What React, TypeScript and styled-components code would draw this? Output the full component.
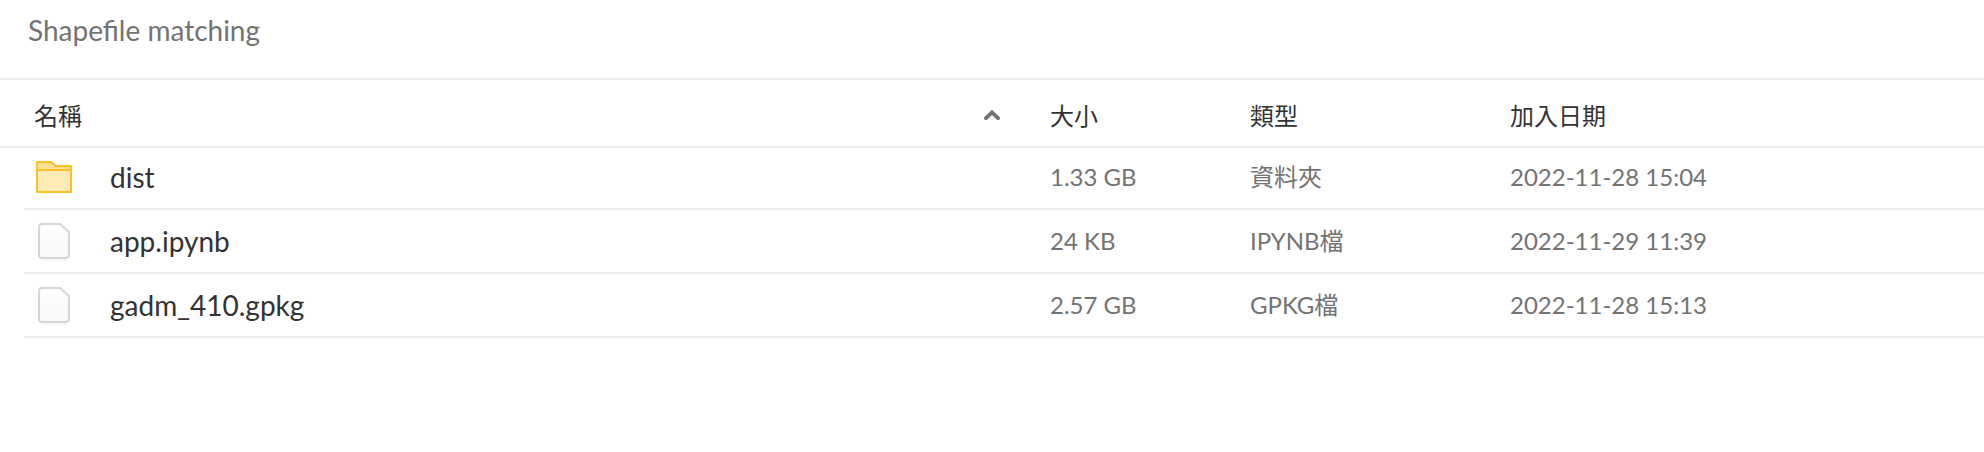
import React from "react";
import styled, { createGlobalStyle } from "styled-components";

const GlobalStyle = createGlobalStyle`
  * { box-sizing: border-box; }
  body {
    margin: 0;
    background: #ffffff;
    font-family: Lato, "Noto Sans CJK TC", sans-serif;
    color: #333333;
  }
`;

const Page = styled.main`
  height: 452px;
  overflow: hidden;
`;

const TitleBar = styled.header`
  height: 80px;
  padding: 13px 28px 0;
  border-bottom: 2px solid #ededed;
  font-size: 28px;
  line-height: 34px;
  color: #737373;
`;

const columns = "1026px 200px 260px 1fr";

const HeaderRow = styled.div`
  display: grid;
  grid-template-columns: ${columns};
  height: 68px;
  padding: 6px 0 0 24px;
  align-items: center;
  border-bottom: 2px solid #ededed;
  font-size: 24px;
  line-height: 36px;
`;

const NameHeading = styled.div`
  display: flex;
  align-items: center;
  justify-content: space-between;
  padding: 0 50px 0 10px;
`;

const Row = styled.div<{ $first: boolean }>`
  display: grid;
  grid-template-columns: ${columns};
  height: ${(p) => (p.$first ? 62 : 64)}px;
  padding-bottom: ${(p) => (p.$first ? 2 : 0)}px;
  margin-left: 24px;
  align-items: center;
  border-bottom: 2px solid #ededed;
`;

const NameCell = styled.div`
  display: flex;
  align-items: center;
  gap: 34px;
  padding-left: 8px;
  font-size: 28px;
  line-height: 34px;
`;

const Cell = styled.div`
  font-size: 24px;
  line-height: 30px;
  color: #737373;
`;

const Icon = styled.svg`
  display: block;
  flex: none;
`;

const SortIcon = styled(Icon)`
  margin-bottom: 2px;
`;

const SortArrow = () => (
  <SortIcon width="16" height="10" viewBox="0 0 16 10">
    <path d="M2 8.2 8 2.4l6 5.8" fill="none" stroke="#737373" strokeWidth="3.8" strokeLinecap="round" />
  </SortIcon>
);

const FolderIcon = () => (
  <Icon width="44" height="44" viewBox="0 0 44 44">
    <path d="M5 15V7h14.2l4.4 4H39v4z" fill="#ffdf91" />
    <path d="M5 15h34v22H5z" fill="#ffebb8" />
    <path d="M5 7h14.2l4.4 4H39v26H5zM5 15h34" fill="none" stroke="#ffbf2b" strokeWidth="2" strokeLinejoin="round" />
  </Icon>
);

const FileIcon = () => (
  <Icon width="44" height="44" viewBox="0 0 44 44">
    <defs>
      <linearGradient id="paper" x1="0" y1="0" x2="0" y2="1">
        <stop offset="0" stopColor="#ffffff" />
        <stop offset="1" stopColor="#f8f8f8" />
      </linearGradient>
    </defs>
    <path d="M8 41h28" stroke="#000000" strokeOpacity=".025" strokeWidth="2" />
    <path
      d="M10 5h18.2L37 13.2V36a3 3 0 0 1-3 3H10a3 3 0 0 1-3-3V8a3 3 0 0 1 3-3z"
      fill="url(#paper)"
      stroke="#d6d6d6"
      strokeWidth="2"
    />
  </Icon>
);

const files = [
  { name: "dist", size: "1.33 GB", type: "資料夾", added: "2022-11-28 15:04", folder: true },
  { name: "app.ipynb", size: "24 KB", type: "IPYNB檔", added: "2022-11-29 11:39", folder: false },
  { name: "gadm_410.gpkg", size: "2.57 GB", type: "GPKG檔", added: "2022-11-28 15:13", folder: false },
];

export default function App() {
  return (
    <Page>
      <GlobalStyle />
      <TitleBar>Shapefile matching</TitleBar>
      <HeaderRow>
        <NameHeading>
          名稱
          <SortArrow />
        </NameHeading>
        <div>大小</div>
        <div>類型</div>
        <div>加入日期</div>
      </HeaderRow>
      {files.map((f, i) => (
        <Row key={f.name} $first={i === 0}>
          <NameCell>
            {f.folder ? <FolderIcon /> : <FileIcon />}
            {f.name}
          </NameCell>
          <Cell>{f.size}</Cell>
          <Cell>{f.type}</Cell>
          <Cell>{f.added}</Cell>
        </Row>
      ))}
    </Page>
  );
}
